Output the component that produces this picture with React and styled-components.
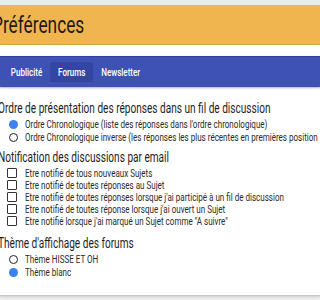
import React from 'react';
import styled, { createGlobalStyle } from 'styled-components';

const Global = createGlobalStyle`
    html, body { margin: 0; padding: 0; background: #ffffff; }
    body { font-family: Roboto, "Noto Sans", sans-serif; overflow: hidden; }
`

// the page font is a narrow face: squeeze the glyphs horizontally
const Narrow = styled.span`
    display: inline-block;
    white-space: nowrap;
    transform: scaleX(${p => p.sx || 0.72});
    transform-origin: ${p => p.origin || 'left'} center;
`

const Page = styled.div`
    width: 320px;
    height: 300px;
    overflow: hidden;
    background: #ececec;
    padding-top: 5px;
    box-sizing: border-box;
`

const Header = styled.header`
    height: 39px;
    background: #f0b54f;
    border-bottom: 1px solid #d9a444;
    display: flex;
    align-items: center;
`

const Title = styled.h1`
    margin: 0 0 0 -8px;
    font-size: 24px;
    font-weight: 400;
    color: #1c1c1c;
    line-height: 28px;
`

const Card = styled.div`
    background: #ffffff;
    padding-top: 11px;
    height: 251px;
    box-sizing: border-box;
    border-bottom: 1px solid #c9c9c9;
    box-shadow: 0 1px 2px rgba(0, 0, 0, 0.12);
`

const Nav = styled.nav`
    height: 30px;
    background: #3e51b5;
    border-top: 1px solid #30409c;
    box-shadow: 0 1px 2px rgba(0, 0, 0, 0.3);
    display: flex;
    align-items: center;
    padding-left: 3px;
`

const Tab = styled.div`
    width: ${p => p.w}px;
    height: 20px;
    display: flex;
    align-items: center;
    justify-content: center;
    border-radius: 2px;
    font-size: 11px;
    font-weight: 500;
    color: #ffffff;
    background: ${p => (p.active ? '#3446a2' : 'transparent')};
`

const Content = styled.div`
    padding-top: 13px;
`

const Section = styled.section`
    margin-bottom: ${p => p.gap || 6}px;
`

const Heading = styled.h2`
    margin: 0 0 2px -2px;
    font-size: 14px;
    font-weight: 400;
    color: #1e1e1e;
    line-height: 16px;
`

const Row = styled.label`
    display: flex;
    align-items: center;
    height: ${p => p.h || 13}px;
    padding-left: ${p => p.pad || 9}px;
    font-size: 11px;
    color: #2a2a2a;
`

const Radio = styled.span`
    width: 9px;
    height: 9px;
    margin-right: 7px;
    border-radius: 50%;
    box-sizing: border-box;
    border: ${p => (p.checked ? '0' : '1.6px solid #222')};
    background: ${p => (p.checked ? '#3b82f0' : 'transparent')};
    flex: none;
`

const Box = styled.span`
    width: 10px;
    height: 10px;
    margin-right: 8px;
    box-sizing: border-box;
    border: 1px solid #333;
    border-radius: 1px;
    flex: none;
`

const tabs = [
    { label: 'Publicité', w: 47 },
    { label: 'Forums', w: 43, active: true },
    { label: 'Newsletter', w: 56 }
]

const notifs = [
    'Etre notifié de tous nouveaux Sujets',
    'Etre notifié de toutes réponses au Sujet',
    "Etre notifié de toutes réponses lorsque j'ai participé à un fil de discussion",
    "Etre notifié de toutes réponse lorsque j'ai ouvert un Sujet",
    'Etre notifié lorsque j\'ai marqué un Sujet comme "A suivre"'
]

const App = () => {
    return (
        <Page>
            <Global />
            <Header>
                <Title><Narrow>Préférences</Narrow></Title>
            </Header>
            <Card>
                <Nav>
                    {tabs.map(t => (
                        <Tab key={t.label} w={t.w} active={t.active}>
                            <Narrow origin="center" sx={0.73}>{t.label}</Narrow>
                        </Tab>
                    ))}
                </Nav>
                <Content>
                    <Section gap={5}>
                        <Heading><Narrow>Ordre de présentation des réponses dans un fil de discussion</Narrow></Heading>
                        <Row><Radio checked /><Narrow sx={0.73}>Ordre Chronologique (liste des réponses dans l'ordre chronologique)</Narrow></Row>
                        <Row><Radio /><Narrow sx={0.73}>Ordre Chronologique inverse (les réponses les plus récentes en premières position</Narrow></Row>
                    </Section>
                    <Section gap={8}>
                        <Heading><Narrow>Notification des discussions par email</Narrow></Heading>
                        {notifs.map(n => (
                            <Row key={n} h={12} pad={7}><Box /><Narrow sx={0.73}>{n}</Narrow></Row>
                        ))}
                    </Section>
                    <Section>
                        <Heading><Narrow>Thème d'affichage des forums</Narrow></Heading>
                        <Row><Radio /><Narrow sx={0.73}>Thème HISSE ET OH</Narrow></Row>
                        <Row><Radio checked /><Narrow sx={0.73}>Thème blanc</Narrow></Row>
                    </Section>
                </Content>
            </Card>
        </Page>
    )
}

export default App;
